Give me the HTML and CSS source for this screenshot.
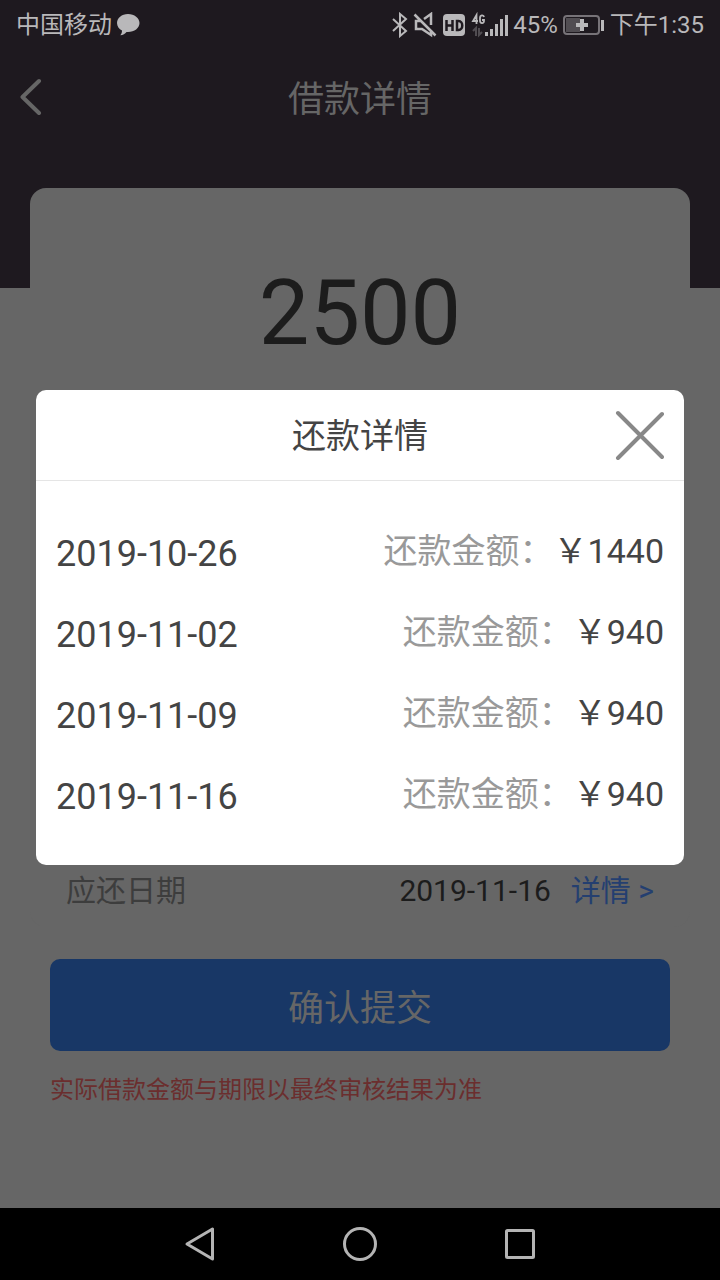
FILE: index.html
```html
<!DOCTYPE html>
<html lang="zh-CN">
<head>
<meta charset="utf-8">
<meta name="viewport" content="width=device-width, initial-scale=1">
<title>借款详情</title>
<link rel="stylesheet" href="styles.css">
</head>
<body>
<div class="status">
  <div class="status-group">
    <span>中国移动</span>
    <svg class="chat" width="24" height="24" viewBox="0 0 24 24"><path d="M12 1C5.600 1 1 5 1 10c0 3.300 2 6 5 7.500 0 2-.6 3.500-1.700 4.700 2.800-.2 4.800-1.300 6.200-3.200H12c6.400 0 11.500-4 11.500-9S18.400 1 12 1z" fill="currentColor"/></svg>
  </div>
  <div class="status-group">
    <svg width="118" height="26" viewBox="0 0 118 26" fill="none" stroke="currentColor" stroke-width="2">
      <path d="M2 7l13 12-6 5V2l6 5L2 19"/>
      <path d="M23.500 2.500l21 21M30 9h-5v8h6l9 6V18M33 7l7-5v11" stroke-width="2.500"/>
      <rect x="52" y="2" width="22" height="22" rx="4" fill="currentColor" stroke="none"/>
      <path d="M55.500 8v11M55.500 13.500h6M61.500 8v11M66 9h1.500c5 0 5 9 0 9H66z" class="cut" stroke-width="2.500"/>
      <path d="M85.500 12V3l-3.500 6h5M93 5c-.5-2.500-4-2-4 1v2.500c0 3.500 4 3.500 4 .5V8h-2" stroke-width="1.800"/>
      <path d="M82 19l3-3v8M88 16v7l3-3" class="faint"/>
      <path d="M95.500 20v4M100.500 17v7M105.500 12v12M110.500 7v17M115.500 3v21" stroke-width="3"/>
    </svg>
    <span>45%</span>
    <svg class="battery" width="42" height="22" viewBox="0 0 42 22">
      <rect x="2" y="2" width="35" height="18" rx="3" fill="none" stroke="#777378" stroke-width="2"/>
      <rect x="4" y="4" width="14" height="14" fill="#514d52"/>
      <path d="M14 11h12M20 5v12" stroke="currentColor" stroke-width="4"/>
      <path d="M40.500 6v11" stroke="currentColor" stroke-width="3"/>
    </svg>
    <span>下午1:35</span>
  </div>
</div>

<div class="screen">
  <main class="page">
    <header class="hero">
      <div class="titlebar">
        <button class="icon-button back" type="button" aria-label="返回">
          <svg width="24" height="38" viewBox="0 0 24 38"><path d="M19 3L2.500 19 19 35" fill="none" stroke="currentColor" stroke-width="4" stroke-linecap="round" stroke-linejoin="round"/></svg>
        </button>
        <h1 class="title">借款详情</h1>
      </div>
    </header>
    <section class="card">
      <p class="amount">2500</p>
      <div class="due">
        <span class="due-label">应还日期</span>
        <span class="due-date">2019-11-16</span>
        <a class="due-link" href="#detail">详情 &gt;</a>
      </div>
    </section>
    <div class="actions">
      <button class="submit" type="button">确认提交</button>
      <p class="note">实际借款金额与期限以最终审核结果为准</p>
    </div>
  </main>

  <div class="overlay">
    <section class="modal" id="detail" role="dialog" aria-labelledby="detail-title">
      <header class="modal-head">
        <h2 class="modal-title" id="detail-title">还款详情</h2>
        <button class="icon-button close" type="button" aria-label="关闭">
          <svg width="50" height="50" viewBox="0 0 50 50"><path d="M3 3l44 44M47 4L3 48" fill="none" stroke="currentColor" stroke-width="4" stroke-linecap="round"/></svg>
        </button>
      </header>
      <ul class="plan">
        <li class="plan-row"><span class="plan-date">2019-10-26</span><span class="plan-sum"><span class="plan-label">还款金额：</span>￥1440</span></li>
        <li class="plan-row"><span class="plan-date">2019-11-02</span><span class="plan-sum"><span class="plan-label">还款金额：</span>￥940</span></li>
        <li class="plan-row"><span class="plan-date">2019-11-09</span><span class="plan-sum"><span class="plan-label">还款金额：</span>￥940</span></li>
        <li class="plan-row"><span class="plan-date">2019-11-16</span><span class="plan-sum"><span class="plan-label">还款金额：</span>￥940</span></li>
      </ul>
    </section>
  </div>
</div>

<nav class="navbar" aria-label="系统导航">
  <button class="icon-button" type="button" aria-label="后退"><svg width="36" height="36" viewBox="0 0 36 36"><path d="M30.500 3v30L5 18z"/></svg></button>
  <button class="icon-button" type="button" aria-label="主页"><svg width="36" height="36" viewBox="0 0 36 36"><circle cx="18" cy="18" r="15.500"/></svg></button>
  <button class="icon-button" type="button" aria-label="最近任务"><svg width="36" height="36" viewBox="0 0 36 36"><rect x="4.500" y="4.500" width="27" height="27" rx="1"/></svg></button>
</nav>
</body>
</html>
```
FILE: styles.css
```css
* {
  box-sizing: border-box;
}

body {
  margin: 0;
  min-height: 100vh;
  display: flex;
  flex-direction: column;
  background: #666;
  font-family: Roboto, "Noto Sans CJK SC", sans-serif;
}

h1, h2, p, ul {
  margin: 0;
  padding: 0;
  font-weight: 400;
}

button {
  border: 0;
  padding: 0;
  font-family: inherit;
}

svg {
  display: block;
}

.icon-button {
  display: flex;
  background: none;
  color: inherit;
}

.status {
  height: 48px;
  padding: 2px 16px 0;
  display: flex;
  align-items: center;
  justify-content: space-between;
  background: #1e191f;
  color: #b9b8ba;
  font-size: 24px;
  line-height: 28px;
}

.status-group {
  display: flex;
  align-items: center;
  gap: 4px;
}

.battery {
  margin-right: 2px;
}

.cut {
  stroke: #1e191f;
}

.faint {
  stroke: #514d52;
}

.screen {
  position: relative;
  flex: 1;
  display: flex;
}

.page {
  flex: 1;
  display: flex;
  flex-direction: column;
}

.hero {
  height: 240px;
  background: #1e191f;
  color: #666;
}

.titlebar {
  height: 98px;
  padding: 0 20px;
  display: grid;
  grid-template-columns: 24px 1fr 24px;
  align-items: center;
}

.title {
  padding-top: 6px;
  font-size: 36px;
  line-height: 48px;
  text-align: center;
}

.card {
  flex: 1;
  margin: -100px 30px 0;
  padding: 72px 36px 16px;
  display: flex;
  flex-direction: column;
  justify-content: space-between;
  border-radius: 16px;
  background: #666;
}

.amount {
  color: #1c1c1c;
  font-size: 90px;
  line-height: 108px;
  text-align: center;
}

.due {
  display: flex;
  align-items: center;
  color: #1c1c1c;
  font-size: 30px;
  line-height: 40px;
}

.due-label {
  flex: 1;
  color: #3d3d3d;
}

.due-link {
  margin-left: 20px;
  color: #243f70;
  text-decoration: none;
}

.actions {
  padding: 32px 50px 100px;
}

.submit {
  display: block;
  width: 100%;
  height: 92px;
  border-radius: 10px;
  background: #183766;
  color: #666;
  font-size: 36px;
}

.note {
  margin-top: 21px;
  color: #6b2e2e;
  font-size: 24px;
  line-height: 36px;
}

.overlay {
  position: absolute;
  inset: 0;
  padding: 0 36px 2px;
  display: flex;
  align-items: center;
}

.modal {
  flex: 1;
  border-radius: 10px;
  background: #fff;
  color: #444;
}

.modal-head {
  height: 91px;
  padding: 0 19px;
  display: grid;
  grid-template-columns: 50px 1fr 50px;
  align-items: center;
  border-bottom: 1px solid #e5e5e5;
}

.modal-title {
  grid-column: 2;
  padding-top: 2px;
  font-size: 34px;
  line-height: 48px;
  text-align: center;
}

.close {
  color: #888;
}

.plan {
  padding: 30px 20px;
  list-style: none;
}

.plan-row {
  height: 81px;
  display: flex;
  align-items: center;
  justify-content: space-between;
  line-height: 48px;
}

.plan-date {
  padding-top: 6px;
  font-size: 36px;
}

.plan-sum {
  font-size: 34px;
}

.plan-label {
  color: #999;
}

.navbar {
  height: 72px;
  padding: 0 182px;
  display: flex;
  align-items: center;
  justify-content: space-between;
  background: #000;
  color: #b4b4b4;
}

.navbar svg {
  fill: none;
  stroke: currentColor;
  stroke-width: 3;
  stroke-linejoin: round;
}
```
